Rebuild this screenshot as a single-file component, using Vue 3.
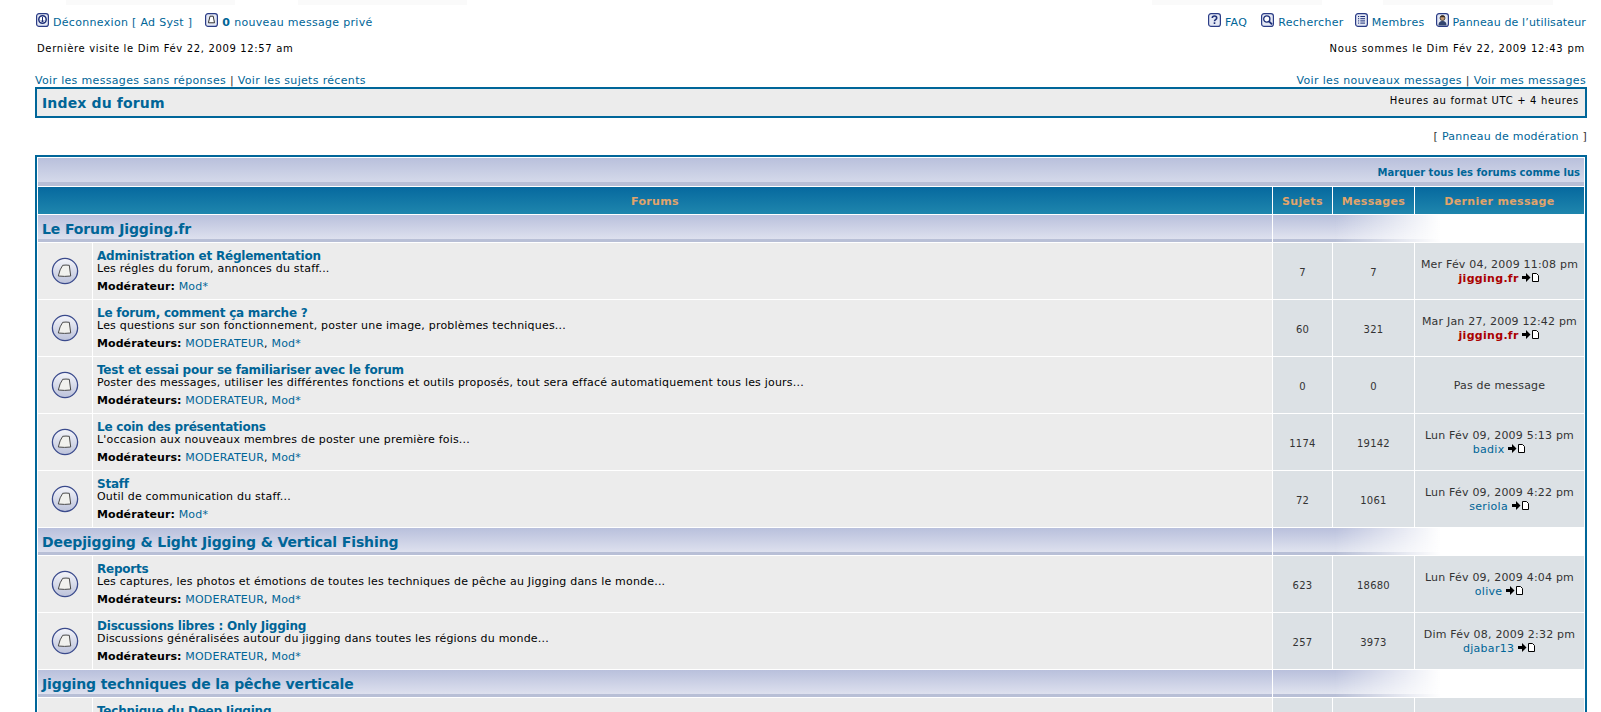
<script setup>
const groups = [
  { name: 'Le Forum Jigging.fr', rows: [
    { t: 'Administration et Réglementation', d: 'Les régles du forum, annonces du staff...', m: ['Mod*'], s: 7, p: 7, date: 'Mer Fév 04, 2009 11:08 pm', u: 'jigging.fr', admin: true },
    { t: 'Le forum, comment ça marche ?', d: 'Les questions sur son fonctionnement, poster une image, problèmes techniques...', m: ['MODERATEUR', 'Mod*'], s: 60, p: 321, date: 'Mar Jan 27, 2009 12:42 pm', u: 'jigging.fr', admin: true },
    { t: 'Test et essai pour se familiariser avec le forum', d: 'Poster des messages, utiliser les différentes fonctions et outils proposés, tout sera effacé automatiquement tous les jours...', m: ['MODERATEUR', 'Mod*'], s: 0, p: 0, date: '' },
    { t: 'Le coin des présentations', d: "L'occasion aux nouveaux membres de poster une première fois...", m: ['MODERATEUR', 'Mod*'], s: 1174, p: 19142, date: 'Lun Fév 09, 2009 5:13 pm', u: 'badix' },
    { t: 'Staff', d: 'Outil de communication du staff...', m: ['Mod*'], s: 72, p: 1061, date: 'Lun Fév 09, 2009 4:22 pm', u: 'seriola' },
  ]},
  { name: 'Deepjigging & Light Jigging & Vertical Fishing', rows: [
    { t: 'Reports', d: 'Les captures, les photos et émotions de toutes les techniques de pêche au Jigging dans le monde...', m: ['MODERATEUR', 'Mod*'], s: 623, p: 18680, date: 'Lun Fév 09, 2009 4:04 pm', u: 'olive' },
    { t: 'Discussions libres : Only Jigging', d: 'Discussions généralisées autour du jigging dans toutes les régions du monde...', m: ['MODERATEUR', 'Mod*'], s: 257, p: 3973, date: 'Dim Fév 08, 2009 2:32 pm', u: 'djabar13' },
  ]},
  { name: 'Jigging techniques de la pêche verticale', rows: [
    { t: 'Technique du Deep Jigging', d: '\u00a0', m: [], s: '', p: '', date: ' ', u: '' },
  ]},
]
</script>

<template>
  <div class="page">
    <header class="top">
      <div class="line nav">
        <div class="side">
          <span class="item gapped">
            <svg class="mini" viewBox="0 0 13 14"><rect x=".6" y=".6" width="11.800" height="12.800" rx="2.500" fill="#e4e8f4" stroke="#2b3c86" stroke-width="1.200"/><circle cx="6.500" cy="6.500" r="3.700" fill="#fff" stroke="#1d2f78" stroke-width="1.500"/><path d="M6.500 4v5M5 7.400 6.500 9 8 7.400" fill="none" stroke="#1d2f78"/></svg>
            <a>Déconnexion [ Ad Syst ]</a>
          </span>
          <span class="item">
            <svg class="mini" viewBox="0 0 13 14"><rect x=".6" y=".6" width="11.800" height="12.800" rx="2.500" fill="#e4e8f4" stroke="#2b3c86" stroke-width="1.200"/><path d="M5 3.200h3.200l1.300 6.600H3.400z" fill="#fff" stroke="#333"/></svg>
            <a><b>0</b> nouveau message privé</a>
          </span>
        </div>
        <div class="side">
          <span class="item faq">
            <svg class="mini" viewBox="0 0 13 14"><rect x=".6" y=".6" width="11.800" height="12.800" rx="2.500" fill="#e4e8f4" stroke="#2b3c86" stroke-width="1.200"/><path d="M4.300 5c0-2.600 4.400-2.600 4.400 0 0 1.600-2.200 1.500-2.200 3.200M6.500 9.200v1.700" fill="none" stroke="#1d2f78" stroke-width="1.600"/></svg>
            <a>FAQ</a>
          </span>
          <span class="item">
            <svg class="mini" viewBox="0 0 13 14"><rect x=".6" y=".6" width="11.800" height="12.800" rx="2.500" fill="#e4e8f4" stroke="#2b3c86" stroke-width="1.200"/><circle cx="5.800" cy="6" r="3.100" fill="#fff" stroke="#1d2f78" stroke-width="1.300"/><path d="m8 8.300 3 3" stroke="#1d2f78" stroke-width="1.800"/></svg>
            <a>Rechercher</a>
          </span>
          <span class="item">
            <svg class="mini" viewBox="0 0 13 14"><rect x=".6" y=".6" width="11.800" height="12.800" rx="2.500" fill="#e4e8f4" stroke="#2b3c86" stroke-width="1.200"/><path d="M3 3.500h1.200M5.300 3.500H10M3 5.700h1.200M5.300 5.700H10M3 7.900h1.200M5.300 7.900H10M3 10.100h1.200M5.300 10.100H10" stroke="#1d2f78"/></svg>
            <a>Membres</a>
          </span>
          <span class="item ucp">
            <svg class="mini" viewBox="0 0 13 14"><rect x=".6" y=".6" width="11.800" height="12.800" rx="2.500" fill="#e4e8f4" stroke="#2b3c86" stroke-width="1.200"/><circle cx="6.500" cy="5" r="2.500" fill="#c79a72" stroke="#333" stroke-width=".8"/><path d="M4 4.200c.5-2.200 4.500-2.200 5 0z" fill="#3a2c22"/><path d="M2.500 12.500c0-3.500 1.800-4.500 4-4.500s4 1 4 4.500z" fill="#33456f"/></svg>
            <a>Panneau de l’utilisateur</a>
          </span>
        </div>
      </div>
      <div class="line stamps">
        <span>Dernière visite le Dim Fév 22, 2009 12:57 am</span>
        <span class="now">Nous sommes le Dim Fév 22, 2009 12:43 pm</span>
      </div>
      <div class="line quick">
        <span><a>Voir les messages sans réponses</a> | <a>Voir les sujets récents</a></span>
        <span class="own"><a>Voir les nouveaux messages</a> | <a>Voir mes messages</a></span>
      </div>
    </header>

    <div class="crumb">
      <a>Index du forum</a>
      <span>Heures au format UTC + 4 heures</span>
    </div>

    <div class="mod">[ <a>Panneau de modération</a> ]</div>

    <table class="forums">
      <colgroup>
        <col class="c1" /><col /><col class="c3" /><col class="c4" /><col class="c5" />
      </colgroup>
      <thead>
        <tr><td colspan="5" class="mark"><a>Marquer tous les forums comme lus</a></td></tr>
        <tr>
          <th colspan="2">Forums</th>
          <th>Sujets</th>
          <th>Messages</th>
          <th>Dernier message</th>
        </tr>
      </thead>
      <tbody v-for="g in groups" :key="g.name">
        <tr class="cat">
          <td colspan="2" class="catname"><a>{{ g.name }}</a></td>
          <td colspan="3" class="catfade"></td>
        </tr>
        <tr v-for="r in g.rows" :key="r.t" class="row">
          <td class="ico">
            <svg width="28" height="28" viewBox="0 0 28 28">
              <defs>
                <linearGradient id="disc" x1="0" y1="0" x2="0" y2="1">
                  <stop offset="0" stop-color="#f4f5fa" /><stop offset="1" stop-color="#bcc2da" />
                </linearGradient>
              </defs>
              <circle cx="14" cy="14" r="12.600" fill="url(#disc)" stroke="#3a4a8c" stroke-width="1.300" />
              <path d="M11.700 8.300Q15 7.800 18.300 8.300L19.700 19Q13.500 19.800 7.300 19Q8.800 12 11.700 8.300Z" fill="#f1f1ee" stroke="#4a4a4a" stroke-width="1" stroke-linejoin="round" />
            </svg>
          </td>
          <td class="info">
            <a class="title">{{ r.t }}</a>
            <div class="desc">{{ r.d }}</div>
            <div class="mods" v-if="r.m.length">
              <b>{{ r.m.length > 1 ? 'Modérateurs:' : 'Modérateur:' }}</b>
              {{ ' ' }}<template v-for="(m, i) in r.m" :key="m"><a>{{ m }}</a><template v-if="i < r.m.length - 1">, </template></template>
            </div>
            <div class="mods" v-else>&nbsp;</div>
          </td>
          <td class="num">{{ r.s }}</td>
          <td class="num">{{ r.p }}</td>
          <td class="last">
            <template v-if="r.u">
              <div>{{ r.date }}</div>
              <div>
                <a :class="{ admin: r.admin }">{{ r.u }}</a>
                {{ ' ' }}<svg class="goto" width="18" height="11" viewBox="0 0 18 11"><path d="M0 4h4V1l4.500 4.500L4 10V7H0z" fill="#000" /><path d="M10.500 1.500h4l2 2v6h-6z" fill="#fff" stroke="#000" /></svg>
              </div>
            </template>
            <template v-else-if="r.date !== ' '">Pas de message</template>
          </td>
        </tr>
      </tbody>
    </table>
  </div>
</template>

<style>
html, body { background: #fff; }
</style>

<style scoped>
.page {
  height: 712px;
  overflow: hidden;
  box-sizing: border-box;
  padding: 12px 14px 0 35px;
  font-family: "DejaVu Sans", Verdana, sans-serif;
  font-size: 11px;
  color: #000;
  background:
    linear-gradient(#fafafa, #fafafa) 66px 0 / 169px 5px no-repeat,
    linear-gradient(#fafafa, #fafafa) 298px 0 / 169px 5px no-repeat,
    linear-gradient(#fafafa, #fafafa) 1152px 0 / 170px 5px no-repeat,
    linear-gradient(#fafafa, #fafafa) 1383px 0 / 170px 5px no-repeat,
    #fff;
}
a { color: #006597; }
.line { display: flex; justify-content: space-between; }
.side { display: flex; gap: 11px; padding: 0 1px; }
.nav { height: 20px; align-items: center; letter-spacing: .31px; }
.item { display: inline-flex; align-items: center; gap: 4px; white-space: nowrap; }
.gapped { margin-right: 2px; }
.faq { margin-right: 3px; }
.ucp { letter-spacing: .14px; }
.mini { width: 13px; height: 14px; margin-top: -5px; flex: none; }
.stamps { height: 20px; margin-top: 6px; padding: 0 2px; font-size: 10px; letter-spacing: .65px; align-items: center; }
.now { letter-spacing: .75px; }
.quick { height: 14px; margin-top: 15px; align-items: center; color: #333; letter-spacing: .33px; }
.own { margin-right: 1px; letter-spacing: .35px; }
.crumb {
  display: flex;
  justify-content: space-between;
  align-items: center;
  height: 27px;
  border: 2px solid #006699;
  background: #ececec;
  padding: 0 6px 0 5px;
}
.crumb a { font-size: 14px; font-weight: bold; letter-spacing: .15px; }
.crumb span { font-size: 10px; margin-top: -4px; letter-spacing: .66px; }
.mod { text-align: right; height: 16px; margin-top: 12px; color: #333; letter-spacing: .25px; }
.forums {
  margin-top: 9px;
  width: 100%;
  table-layout: fixed;
  border-collapse: separate;
  border-spacing: 1px;
  border: 2px solid #006699;
  background: #fff;
}
.c1 { width: 54px; }
.c3 { width: 59px; }
.c4 { width: 81px; }
.c5 { width: 169px; }
td, th { padding: 0; }
.mark {
  height: 28px;
  text-align: right;
  padding-right: 4px;
  font-size: 10px;
  font-weight: bold;
  background: linear-gradient(#b9c0dc, #d4d9ea 85%, #b8bfd6 85%);
}
th {
  height: 27px;
  padding-top: 1px;
  box-sizing: border-box;
  font-size: 11px;
  font-weight: bold;
  letter-spacing: .35px;
  color: #e2a46a;
  background: linear-gradient(#06699f, #1f86ad);
}
.cat { height: 27px; }
.catname {
  padding-left: 4px;
  font-size: 14px;
  font-weight: bold;
  letter-spacing: -.12px;
  background: linear-gradient(#b9c0dc, #dde0ee 88%, #b8bfd6 88%);
}
.catfade {
  background:
    linear-gradient(90deg, rgba(255,255,255,0) 0, rgba(255,255,255,0) 20%, #fff 54%),
    linear-gradient(#b9c0dc, #e0e3ef 88%, #b8bfd6 88%);
}
.row { height: 56px; }
.row td { background: #dce1e5; }
.row .ico, .row .info { background: #ececec; }
.ico { text-align: center; vertical-align: middle; }
.ico svg { display: block; margin: 0 auto; }
.info { padding: 0 4px; line-height: 13px; letter-spacing: .2px; }
.title { display: block; font-size: 12px; font-weight: bold; line-height: 12px; letter-spacing: -.22px; }
.desc { line-height: 13px; }
.mods { margin-top: 5px; line-height: 13px; }
.mods b { color: #000; letter-spacing: .08px; }
.num { padding-top: 2px; text-align: center; color: #333; font-size: 10px; letter-spacing: .2px; }
.last { padding-top: 2px; text-align: center; font-size: 11px; color: #333; line-height: 14.5px; letter-spacing: .2px; }
.last a { letter-spacing: .3px; }
.admin { color: #aa0000; font-weight: bold; }
.goto { vertical-align: -1px; }
</style>
